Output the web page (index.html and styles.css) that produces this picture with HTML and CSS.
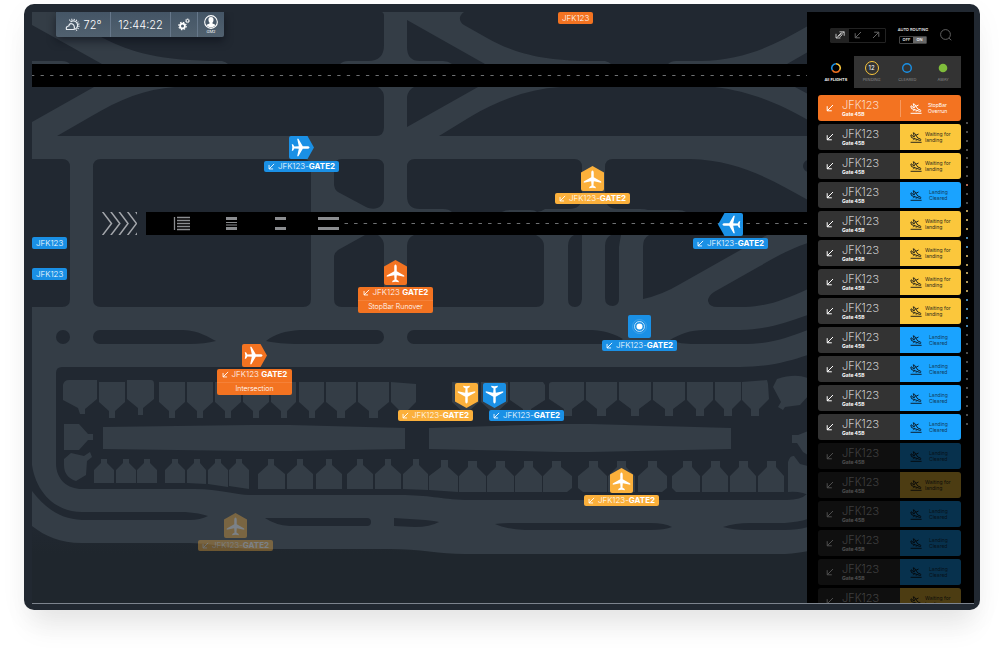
FILE: index.html
```html
<!DOCTYPE html>
<html lang="en">
<head>
<meta charset="utf-8">
<title>Ground traffic</title>
<link rel="stylesheet" href="styles.css">
</head>
<body>
<svg class="sprite" aria-hidden="true">
  <symbol id="arrow-in" viewBox="0 0 8 8"><path d="M7 1 1.2 6.8M1.2 2.2v4.6h4.6" fill="none" stroke="currentColor"/></symbol>
  <symbol id="arrow-out" viewBox="0 0 8 8"><path d="M1 7 6.8 1.2M2.2 1.2h4.6v4.6" fill="none" stroke="currentColor"/></symbol>
  <symbol id="arrow-both" viewBox="0 0 10 8"><path d="M4.5.8h4.7v4M9.2.8 1 7M1 2.8V7h4.4M6.5 1.5 3 5M7.5 3.5 4.5 6.2" fill="none" stroke="currentColor" stroke-width=".9"/></symbol>
  <symbol id="plane" viewBox="0 0 20 20"><path d="M10 .5c.9 0 1.3 1.2 1.3 2.6v4.500l7.900 4.600v1.300l-7.800-1.700-.4 4.600 2.400 1.500v1.300L10 18.600l-3.400.6v-1.300L9 16.400l-.4-4.600-7.800 1.700v-1.300l7.900-4.600V3.100C8.700 1.700 9.100.5 10 .5z" fill="#fff"/></symbol>
  <symbol id="pin-up" viewBox="0 0 23 25"><path d="M11.500 0 23 6.500V23a2 2 0 0 1-2 2H2a2 2 0 0 1-2-2V6.500z" fill="currentColor"/><use href="#plane" x="2" y="4" width="19" height="19"/></symbol>
  <symbol id="pin-down" viewBox="0 0 23 25"><use href="#pin-up" width="23" height="25" transform="rotate(180 11.500 12.500)"/></symbol>
  <symbol id="pin-right" viewBox="0 0 25 23"><use href="#pin-up" width="23" height="25" transform="translate(25 0) rotate(90)"/></symbol>
  <symbol id="pin-left" viewBox="0 0 25 23"><use href="#pin-up" width="23" height="25" transform="translate(0 23) rotate(-90)"/></symbol>
  <symbol id="pin-spot" viewBox="0 0 23 23"><rect width="23" height="23" rx="2" fill="currentColor"/><circle cx="11.500" cy="11.500" r="3" fill="#fff"/><circle cx="11.500" cy="11.500" r="5" fill="none" stroke="#fff" stroke-width=".7"/><circle cx="11.500" cy="11.500" r="7" fill="none" stroke="#fff" stroke-width=".4" opacity=".4"/></symbol>
  <symbol id="landing" viewBox="0 0 12 11"><g fill="none" stroke="currentColor" stroke-width="1" stroke-linejoin="round"><path d="M.8 3.200 1.500 5.600 9.800 8.400c1.500.4 1.500-1 .4-1.500L7.800 6 4.500 1.200 3.200.8l1.300 4-2-.7-.8-1.300z"/><path d="M4.600 6.700 3.200 8.200M7 7.500l-1 1.200M5.500 3.500l3-1.500M.6 10.300h11"/></g></symbol>
</svg>

<main class="device">
  <section class="map" aria-label="Airport map">
    <svg class="map__ground" viewBox="32 12 775 591" preserveAspectRatio="xMinYMin slice" aria-hidden="true">
      <defs>
        <clipPath id="chevron-box"><rect x="102" y="212" width="35" height="23"/></clipPath>
        <linearGradient id="fade" x1="0" y1="0" x2="0" y2="1"><stop offset="0" stop-color="#212831"/><stop offset=".35" stop-color="#1f262d"/><stop offset="1" stop-color="#1f262d"/></linearGradient>
      </defs>
      <rect x="32" y="12" width="776" height="592" fill="#343d46"/>
      <g fill="#212831">
        <path d="M32 25 102 64H70Q67 61 62 61H32zM55 12 103 38C130 52 160 61 222 61Q226 62 228 64H340Q343 61 348 61H368Q384 61 384 45V16Q384 12 381 12z"/>
        <path d="M407 20 485 64H452Q448 61 443 61H420Q407 61 407 47zM464 12C458 16 459 22 464 25L487 38C512 52 540 61 590 61H605Q609 62 611 64H668Q671 61 676 61H700C745 60 775 45 808 26V12zM787 64 808 52V64z"/>
        <path d="M32 87H94L32 122zM57 136 90 117C120 99 145 89 175 87H378Q384 91 384 97V127Q384 136 376 136zM407 127V97Q408 90 414 87H478zM439 136 470 117C500 99 530 89 560 87H715C755 92 785 107 808 120V136zM795 87H808V94z"/>
        <path d="M32 159H62Q70 159 70 167V299Q70 307 62 307H32zM101 159H303Q311 159 311 167V299Q311 307 303 307H101Q93 307 93 299V167Q93 159 101 159z"/>
        <path d="M334 167Q334 159 342 159H376Q384 159 384 167V198C384 208 374 211 366 207L338 192Q334 189 334 184zM415 159H574Q582 159 582 167V198Q581 209 569 209H545Q541 212 537 212 535 210 530 210H510Q505 210 502 212H452Q449 209 443 209H420Q407 209 407 196V167Q407 159 415 159z"/>
        <path d="M605 167Q605 159 613 159H690C740 160 775 182 808 200V212H686Q683 210 678 210H648Q645 209 640 209H618Q605 209 605 196z"/><circle cx="809" cy="166" r="6"/>
        <path d="M365 235H378Q384 239 384 246V299Q384 307 376 307H342Q334 307 334 299V257Q334 253 338 250zM414 235H536Q544 239 544 246V299Q544 307 536 307H415Q407 307 407 299V246Q407 238 414 235z"/>
        <path d="M574 235H582V299Q581 307 575 307 568 307 568 299V246Q568 238 574 235zM611 235H621Q620 240 619 247V299Q619 305 613 306 605 306 605 298V246Q605 238 611 235zM649 235H767L682 283Q662 295 643 299V247Q643 238 649 235z"/>
        <path d="M808 243C790 249 775 257 760 266L714 292Q708 296 708 301 709 307 718 307H745C770 306 785 299 808 289z"/>
        <circle cx="63" cy="337" r="7"/>
        <path d="M100 330H183C200 331 208 337 216 341 208 343 200 344 190 344H100a7 7 0 0 1 0-14zM266 341C275 334 285 331 300 330H377a7 7 0 0 1 0 14H300C285 344 275 343 266 341zM414 330H592C608 331 616 335 623 339 618 343 610 344 600 344H414a7 7 0 0 1 0-14zM670 340C680 334 690 330 705 330H740C770 329 785 323 808 315V330C785 338 775 344 740 344H695C685 344 677 343 670 340z"/>
        <path d="M62 367H740C770 367 790 361 808 355V493Q802 500 787 500H465C440 499 430 495 400 495H250C235 495 220 489 195 489H82C68 489 56 480 56 463V373Q56 367 62 367z"/>
        <path d="M32 465C36 492 55 512 82 512H185Q200 513 208 516 200 520 190 520H82C60 519 45 508 32 491zM265 518H367a4 4 0 0 1 0 8H290Q275 525 265 518zM394 518 425 520Q435 521 439 522 430 527 415 527L394 526zM495 524Q505 523 510 523H650Q665 523 672 527 665 530 650 530H525Q505 529 495 524zM723 527Q735 523 750 523H785Q800 522 808 519V527Q798 530 785 530H745Q735 530 723 527z"/>
      </g>
      <path d="M32 526C45 536 60 543 82 543H190C220 544 230 549 260 549H390C420 549 440 554 465 554H785Q800 553 808 551V604H32z" fill="url(#fade)"/>
      <g fill="#343d46">
        <path d="M63 385Q64 380 69 380H97V399L85 409V414H80L78 408 63 400zM99 382h26v20l-10 9v7h-6v-7l-10-9zM127 380h24q3 0 3 4v15l-11 9v7h-5v-7l-11-9z"/>
        <path d="M159 382h26v20l-10 9v7h-6v-7l-10-9zM187 382h26v20l-10 9v7h-6v-7l-10-9zM215 382h26v20l-10 9v7h-6v-7l-10-9zM243 382h26v20l-10 9v7h-6v-7l-10-9zM271 382h25v20l-9 9v7h-6v-7l-10-9zM299 382h25v20l-9 9v7h-6v-7l-10-9zM326 382h30v20l-11 9v7h-8v-7l-11-9zM358 382h31v20l-11 9v7h-9v-7l-11-9zM391 382l25 2v18l-9 9v7h-7v-7l-9-9z"/>
        <path d="M452 382h27v20l-10 9v7h-7v-7l-10-9zM481 382h27v20l-10 9v7h-7v-7l-10-9zM510 382h33l2 3v15l-14 9v7h-8v-7l-13-9zM549 385q0-3 3-3h32v18l-12 9v7h-8v-7l-15-10zM586 382h31v18l-11 9v7h-9v-7l-11-9zM619 382h32v18l-12 9v7h-8v-7l-12-9zM653 382h32v18l-12 9v7h-8v-7l-12-9zM687 382h26v18l-9 9v7h-8v-7l-9-9zM715 382h26v18l-9 9v7h-8v-7l-9-9zM742 382 767 380 768 384 769 399 759 409V416H751V409L742 400z"/>
        <path d="M808 378Q795 373 777 379L773 387 781 402 778 407 783 410 785 407 800 405 808 396zM792 435h6l10-4v24l-5-3-6-9h-5zM788 462Q790 455 794 456L800 464 808 466V495L803 493Q795 491 788 492z"/>
        <path d="M64 424h15l9 10h5v6h-5l-9 10H64zM64 459 71 453 84 456 90 452 92 457 87 461 86 475 76 481Q64 477 64 465z"/>
        <path d="M103 427 250 425H290L405 428V449L290 451H250L103 449zM429 428 560 424H590L731 428V449L590 452H560L429 449z"/>
        <path d="M101 459h6v4l7 7v13H94v-13l7-7zM123 459h6v4l7 7v13h-20v-13l7-7zM144 459h6v4l7 7v13h-20v-13l7-7zM172 459h6v4l7 7v13h-20v-13l7-7zM194 459h6v4l6 7v14l-19-1v-13l7-7zM215 459h6v4l7 7v17l-20-3v-14l7-7zM236 459h6v4l7 7v19l-20-3v-16l7-7z"/>
        <path d="M268 459h6v6l11 9v15h-27v-15l10-9zM297 459h6v6l10 9v15h-26v-15l10-9zM326 459h6v6l10 9v15h-26v-15l10-9zM357 459h6v6l10 9v15h-26v-15l10-9zM385 459h6v6l10 9v15h-26v-15l10-9zM413 459h6v6l9 9v16l-25-1v-15l10-9zM441 460h7v7l10 9v16l-29-2v-14l12-9zM468 461h9v6l9 9v16h-27v-16l9-9zM496 461h9v6l9 9v16h-27v-16l9-9zM524 461h9v6l9 9v16h-27v-16l9-9z"/>
        <path d="M552 461h9v6l11 9v12l-5 4h-24v-16l9-9zM589 461h9v6l9 9v16h-24l-5-4v-12l11-9zM617 461h9v6l9 9v16h-27v-16l9-9zM648 461h9v6l10 9v12l-5 4h-24v-16l10-9zM683 461h9v6l8 9v16h-24l-4-4v-12l11-9zM711 461h9v6l8 9v16h-26v-16l9-9zM739 461h9v6l8 9v16h-26v-16l9-9zM767 461h9v6l8 9v16h-26v-16l9-9z"/>
      </g>
      <path d="M32 64H808V87H32zM146 212H808V235H146z" fill="#000"/>
      <g fill="none" stroke="#8b8d90">
        <path d="M32 75.500H808" stroke="#6f7173" stroke-dasharray="3.300 6.270" stroke-dashoffset="1"/>
        <path d="M344.500 223.500H808" stroke="#6f7173" stroke-dasharray="3.500 6.070"/>
        <path d="M174.500 217V230" stroke-width="1.300"/>
        <path d="M177 217.500h13M177 220.500h13M177 223.500h13M177 226.500h13M177 229.500h13" stroke-width="1.600"/>
        <path d="M226 218.500h11M226 228.500h11M275 218.500h11M275 228.500h11" stroke-width="3"/>
        <path d="M226 222.500h11M226 225h11"/>
        <path d="M318 218.500h21M318 228.500h21" stroke-width="3"/>
        <g clip-path="url(#chevron-box)" stroke="#a3a6ab" stroke-width="1.500"><path d="M102 211 111.500 223.500 102 236M110.300 211 119.800 223.500 110.300 236M118.600 211 128 223.500 118.600 236M127 211 136.500 223.500 127 236M135.300 211 144 223.500 135.300 236"/></g>
      </g>
    </svg>

    <header class="toolbar">
      <div class="toolbar__cell toolbar__weather">
        <svg width="17" height="14" viewBox="0 0 17 14" fill="none" stroke="#e8edf2"><path d="M1.500 11.500Q.5 8.500 3.800 8 4.500 4.800 7.500 6 10 7.500 9.200 11.500z" stroke-width="1.200"/><path d="M5.500 4A4.300 4.300 0 1 1 10 11.200" stroke-width="1.200"/><path d="M4.400 2.500A6 6 0 1 1 10 13" stroke-width="1.500" stroke-dasharray="1 1.200"/></svg>
        <span>72°</span>
      </div>
      <time class="toolbar__cell toolbar__time">12:44:22</time>
      <button class="toolbar__cell" aria-label="Settings">
        <svg width="12" height="13" viewBox="0 0 12 13" fill="none" stroke="#fff"><circle cx="4.500" cy="8" r="2.400" stroke-width="1.800"/><circle cx="4.500" cy="8" r="3.700" stroke-width="1.200" stroke-dasharray="1.500 1.400"/><circle cx="9.500" cy="2.800" r="1.300" stroke-width="1"/><circle cx="9.500" cy="2.800" r="2" stroke-width=".8" stroke-dasharray=".9 .67"/></svg>
      </button>
      <button class="toolbar__cell toolbar__user">
        <svg width="14" height="14" viewBox="0 0 13 13"><circle cx="6.500" cy="6.500" r="5.900" fill="none" stroke="#fff"/><path d="M6.500 1.800c2 0 2.500 1.400 2.300 3-.1 1.300-.8 2-1.100 2.600.2 1 2.500 1 3 2.200Q9 11.500 6.500 11.500T2.300 9.600c.5-1.200 2.800-1.200 3-2.200-.3-.6-1-1.300-1.100-2.600-.2-1.600.3-3 2.300-3z" fill="#fff"/></svg>
        <span>GM2</span>
      </button>
    </header>

    <span class="tag tag--orange tag--north">JFK123</span>
    <span class="tag tag--blue tag--west-a">JFK123</span>
    <span class="tag tag--blue tag--west-b">JFK123</span>

    <div class="pin pin--blue pin--a"><svg class="pin__icon pin__icon--wide"><use href="#pin-right"/></svg><div class="pin__label"><p><svg><use href="#arrow-in"/></svg>JFK123-<b>GATE2</b></p></div></div>
    <div class="pin pin--yellow pin--b"><svg class="pin__icon"><use href="#pin-up"/></svg><div class="pin__label"><p><svg><use href="#arrow-in"/></svg>JFK123-<b>GATE2</b></p></div></div>
    <div class="pin pin--blue pin--c"><svg class="pin__icon pin__icon--wide"><use href="#pin-left"/></svg><div class="pin__label"><p><svg><use href="#arrow-in"/></svg>JFK123-<b>GATE2</b></p></div></div>
    <div class="pin pin--orange pin--d"><svg class="pin__icon"><use href="#pin-up"/></svg><div class="pin__label"><p><svg><use href="#arrow-in"/></svg>JFK123 <b>GATE2</b></p><p class="pin__alert">StopBar Runover</p></div></div>
    <div class="pin pin--orange pin--e"><svg class="pin__icon pin__icon--wide"><use href="#pin-right"/></svg><div class="pin__label"><p><svg><use href="#arrow-in"/></svg>JFK123 <b>GATE2</b></p><p class="pin__alert">Intersection</p></div></div>
    <div class="pin pin--blue pin--f"><svg class="pin__icon pin__icon--square"><use href="#pin-spot"/></svg><div class="pin__label"><p><svg><use href="#arrow-in"/></svg>JFK123-<b>GATE2</b></p></div></div>
    <div class="pin pin--yellow pin--g"><svg class="pin__icon"><use href="#pin-down"/></svg><div class="pin__label"><p><svg><use href="#arrow-in"/></svg>JFK123-<b>GATE2</b></p></div></div>
    <div class="pin pin--blue pin--h"><svg class="pin__icon"><use href="#pin-down"/></svg><div class="pin__label"><p><svg><use href="#arrow-in"/></svg>JFK123-<b>GATE2</b></p></div></div>
    <div class="pin pin--yellow pin--i"><svg class="pin__icon"><use href="#pin-up"/></svg><div class="pin__label"><p><svg><use href="#arrow-in"/></svg>JFK123-<b>GATE2</b></p></div></div>
    <div class="pin pin--yellow pin--j"><svg class="pin__icon"><use href="#pin-up"/></svg><div class="pin__label"><p><svg><use href="#arrow-in"/></svg>JFK123-<b>GATE2</b></p></div></div>
  </section>

  <aside class="panel">
    <div class="controls">
      <div class="modes">
        <button class="is-on" aria-label="All directions"><svg width="10" height="8"><use href="#arrow-both"/></svg></button>
        <button aria-label="Arrivals"><svg width="8" height="8"><use href="#arrow-in"/></svg></button>
        <button aria-label="Departures"><svg width="8" height="8"><use href="#arrow-out"/></svg></button>
      </div>
      <div class="routing">
        <span>AUTO ROUTING</span>
        <div class="routing__switch"><button>OFF</button><button class="is-on">ON</button></div>
      </div>
      <button class="search" aria-label="Search"><svg width="12" height="12" viewBox="0 0 12 12"><circle cx="5.500" cy="5.500" r="4.900" fill="none" stroke="#777" stroke-width=".8"/><path d="m9 9.200 2.300 2" stroke="#777" stroke-width=".8"/></svg></button>
    </div>

    <nav class="tabs">
      <button class="is-on"><svg width="16" height="16" viewBox="0 0 16 16" fill="none" stroke-width="1.600"><path d="M8 3.700A4.300 4.300 0 0 1 11.700 10.200" stroke="#fbc73c"/><path d="M11.700 10.200A4.300 4.300 0 0 1 4.300 10.200" stroke="#f37321"/><path d="M4.300 10.200A4.300 4.300 0 0 1 8 3.700" stroke="#1a90e5"/></svg>All FLIGHTS</button>
      <button><span class="tabs__count">12</span>PENDING</button>
      <button><svg width="16" height="16" viewBox="0 0 16 16"><circle cx="8" cy="8" r="4.300" fill="none" stroke="#1a90e5" stroke-width="1.400"/></svg>CLEARED</button>
      <button><svg width="16" height="16" viewBox="0 0 16 16"><circle cx="8" cy="8" r="4.300" fill="#7fbc3b"/></svg>AWAY</button>
    </nav>

    <div class="board">
      <ul class="flights">
        <li class="flight flight--alert"><svg class="flight__way"><use href="#arrow-in"/></svg><div class="flight__id"><h3>JFK123</h3><p>Gate 45B</p></div><div class="flight__status"><svg><use href="#landing"/></svg><span>StopBar<br>Overrun</span></div></li>
        <li class="flight flight--wait"><svg class="flight__way"><use href="#arrow-in"/></svg><div class="flight__id"><h3>JFK123</h3><p>Gate 45B</p></div><div class="flight__status"><svg><use href="#landing"/></svg><span>Waiting for<br>landing</span></div></li>
        <li class="flight flight--wait"><svg class="flight__way"><use href="#arrow-in"/></svg><div class="flight__id"><h3>JFK123</h3><p>Gate 45B</p></div><div class="flight__status"><svg><use href="#landing"/></svg><span>Waiting for<br>landing</span></div></li>
        <li class="flight flight--clear"><svg class="flight__way"><use href="#arrow-in"/></svg><div class="flight__id"><h3>JFK123</h3><p>Gate 45B</p></div><div class="flight__status"><svg><use href="#landing"/></svg><span>Landing<br>Cleared</span></div></li>
        <li class="flight flight--wait"><svg class="flight__way"><use href="#arrow-in"/></svg><div class="flight__id"><h3>JFK123</h3><p>Gate 45B</p></div><div class="flight__status"><svg><use href="#landing"/></svg><span>Waiting for<br>landing</span></div></li>
        <li class="flight flight--wait"><svg class="flight__way"><use href="#arrow-in"/></svg><div class="flight__id"><h3>JFK123</h3><p>Gate 45B</p></div><div class="flight__status"><svg><use href="#landing"/></svg><span>Waiting for<br>landing</span></div></li>
        <li class="flight flight--wait"><svg class="flight__way"><use href="#arrow-in"/></svg><div class="flight__id"><h3>JFK123</h3><p>Gate 45B</p></div><div class="flight__status"><svg><use href="#landing"/></svg><span>Waiting for<br>landing</span></div></li>
        <li class="flight flight--wait"><svg class="flight__way"><use href="#arrow-in"/></svg><div class="flight__id"><h3>JFK123</h3><p>Gate 45B</p></div><div class="flight__status"><svg><use href="#landing"/></svg><span>Waiting for<br>landing</span></div></li>
        <li class="flight flight--clear"><svg class="flight__way"><use href="#arrow-in"/></svg><div class="flight__id"><h3>JFK123</h3><p>Gate 45B</p></div><div class="flight__status"><svg><use href="#landing"/></svg><span>Landing<br>Cleared</span></div></li>
        <li class="flight flight--clear"><svg class="flight__way"><use href="#arrow-in"/></svg><div class="flight__id"><h3>JFK123</h3><p>Gate 45B</p></div><div class="flight__status"><svg><use href="#landing"/></svg><span>Landing<br>Cleared</span></div></li>
        <li class="flight flight--clear"><svg class="flight__way"><use href="#arrow-in"/></svg><div class="flight__id"><h3>JFK123</h3><p>Gate 45B</p></div><div class="flight__status"><svg><use href="#landing"/></svg><span>Landing<br>Cleared</span></div></li>
        <li class="flight flight--clear"><svg class="flight__way"><use href="#arrow-in"/></svg><div class="flight__id"><h3>JFK123</h3><p>Gate 45B</p></div><div class="flight__status"><svg><use href="#landing"/></svg><span>Landing<br>Cleared</span></div></li>
        <li class="flight flight--clear flight--dim"><svg class="flight__way"><use href="#arrow-in"/></svg><div class="flight__id"><h3>JFK123</h3><p>Gate 45B</p></div><div class="flight__status"><svg><use href="#landing"/></svg><span>Landing<br>Cleared</span></div></li>
        <li class="flight flight--wait flight--dim"><svg class="flight__way"><use href="#arrow-in"/></svg><div class="flight__id"><h3>JFK123</h3><p>Gate 45B</p></div><div class="flight__status"><svg><use href="#landing"/></svg><span>Waiting for<br>landing</span></div></li>
        <li class="flight flight--clear flight--dim"><svg class="flight__way"><use href="#arrow-in"/></svg><div class="flight__id"><h3>JFK123</h3><p>Gate 45B</p></div><div class="flight__status"><svg><use href="#landing"/></svg><span>Landing<br>Cleared</span></div></li>
        <li class="flight flight--clear flight--dim"><svg class="flight__way"><use href="#arrow-in"/></svg><div class="flight__id"><h3>JFK123</h3><p>Gate 45B</p></div><div class="flight__status"><svg><use href="#landing"/></svg><span>Landing<br>Cleared</span></div></li>
        <li class="flight flight--clear flight--dim"><svg class="flight__way"><use href="#arrow-in"/></svg><div class="flight__id"><h3>JFK123</h3><p>Gate 45B</p></div><div class="flight__status"><svg><use href="#landing"/></svg><span>Landing<br>Cleared</span></div></li>
        <li class="flight flight--wait flight--dim"><svg class="flight__way"><use href="#arrow-in"/></svg><div class="flight__id"><h3>JFK123</h3><p>Gate 45B</p></div><div class="flight__status"><svg><use href="#landing"/></svg><span>Waiting for<br>landing</span></div></li>
      </ul>
      <div class="dots" aria-hidden="true"><i></i><i></i><i></i><i></i><i></i><i></i><i></i><i class="o"></i><i></i><i></i><i class="y"></i><i class="y"></i><i class="y"></i><i class="b"></i><i class="b"></i><i class="y"></i><i class="y"></i><i class="y"></i><i class="y"></i><i class="y"></i><i class="b"></i><i class="b"></i><i class="b"></i><i class="b"></i><i></i><i></i><i></i><i></i><i></i><i></i><i></i><i></i><i></i><i></i><i></i></div>
    </div>
  </aside>
</main>
</body>
</html>
```

FILE: styles.css
```css
* { box-sizing: border-box; }

body {
  margin: 0;
  min-height: 100vh;
  padding: 4px 24px 44px;
  background: #fff;
  font-family: Inter, "Liberation Sans", sans-serif;
  color: #fff;
  overflow: hidden;
}

button {
  margin: 0;
  padding: 0;
  border: 0;
  background: none;
  color: inherit;
  font: inherit;
}

h3, p, ul { margin: 0; padding: 0; font-weight: inherit; }

svg { display: block; flex: none; }

.sprite { position: absolute; width: 0; height: 0; }

.device {
  display: flex;
  height: calc(100vh - 48px);
  padding: 8px 6px 6px 8px;
  border-radius: 10px;
  background: #212831;
  box-shadow: 0 24px 28px -8px rgba(0, 0, 0, .08), 0 8px 30px rgba(0, 0, 0, .04);
}

/* Map */
.map {
  position: relative;
  flex: 1;
  overflow: hidden;
  border-bottom: 1px solid #7d848e;
}

.map__ground { width: 100%; height: 100%; }

.toolbar {
  position: absolute;
  top: 0;
  left: 24px;
  display: flex;
  height: 25px;
  border-radius: 0 0 2px 2px;
  background: linear-gradient(#445566, #51616f);
  box-shadow: 0 4px 8px rgba(10, 14, 24, .6);
}

.toolbar__cell {
  display: flex;
  align-items: center;
  justify-content: center;
  width: 27px;
  border-right: 1px solid #66778a;
}
.toolbar__cell:last-child { width: 26px; border-right: 0; }
.toolbar__weather { width: 55px; gap: 2px; font-size: 11px; font-weight: 300; }
.toolbar__time { width: 60px; font-size: 11px; font-weight: 300; }
.toolbar__user { flex-direction: column; font-size: 4px; line-height: 6px; }

.tag {
  position: absolute;
  padding: 0 4px;
  border-radius: 2px;
  font-size: 8px;
  line-height: 12px;
  font-weight: 300;
}
.tag--orange { background: #f37321; }
.tag--blue { background: #1a90e5; }
.tag--north { left: 526px; top: 0; }
.tag--west-a { left: 0; top: 225px; }
.tag--west-b { left: 0; top: 256px; }

.pin {
  position: absolute;
  display: flex;
  flex-direction: column;
  align-items: center;
  gap: 2px;
  width: 75px;
}
.pin--blue { color: #1a90e5; }
.pin--yellow { color: #fbb03b; }
.pin--orange { color: #f37321; }

.pin__icon { width: 23px; height: 25px; }
.pin__icon--wide { width: 25px; height: 23px; }
.pin__icon--square { height: 23px; }

.pin__label {
  width: 75px;
  border-radius: 2px;
  background: currentColor;
  font-size: 8px;
  line-height: 11px;
  white-space: pre;
}
.pin__label p {
  display: flex;
  align-items: center;
  justify-content: center;
  color: #fff;
  font-weight: 300;
}
.pin__label b { font-weight: 700; }
.pin__label svg { width: 7px; height: 7px; margin-right: 3px; }
.pin__label .pin__alert {
  margin-top: 2px;
  border-top: 1px solid #f58138;
  font-size: 7px;
  line-height: 12px;
}

.pin--a { left: 232px; top: 124px; }
.pin--b { left: 523px; top: 154px; }
.pin--c { left: 661px; top: 201px; }
.pin--d { left: 326px; top: 248px; }
.pin--e { left: 185px; top: 332px; }
.pin--f { left: 570px; top: 303px; }
.pin--g { left: 366px; top: 371px; width: 80px; align-items: flex-start; }
.pin--g .pin__icon { align-self: flex-end; }
.pin--h { left: 451px; top: 371px; width: 81px; align-items: flex-end; }
.pin--h .pin__icon { align-self: flex-start; }
.pin--i { left: 552px; top: 456px; }
.pin--j { left: 166px; top: 501px; opacity: .35; }

/* Flight panel */
.panel {
  display: flex;
  flex-direction: column;
  flex: none;
  width: 167px;
  padding-left: 11px;
  background: #000;
  border-bottom: 1px solid #7d848e;
  overflow: hidden;
}

.controls {
  display: flex;
  flex: none;
  align-items: center;
  justify-content: space-between;
  height: 44px;
  padding: 2px 22px 0 12px;
}

.modes { display: flex; border: 1px solid #222; border-radius: 1px; color: #666; }
.modes button { display: grid; place-items: center; width: 18px; height: 13px; }
.modes .is-on { background: #222; color: #ccc; }

.routing { width: 28px; font-size: 4px; line-height: 6px; font-weight: 500; }
.routing span { display: flex; justify-content: center; white-space: nowrap; }
.routing__switch { display: flex; margin-top: 3px; border: 1px solid #444; border-radius: 1px; }
.routing__switch button { flex: 1; height: 6px; }
.routing__switch .is-on { background: #666; }

.tabs {
  display: flex;
  flex: none;
  margin-right: 13px;
  background: #333;
}
.tabs button {
  display: flex;
  flex: 1;
  flex-direction: column;
  align-items: center;
  gap: 1px;
  height: 32px;
  padding-top: 4px;
  color: #8a8a8a;
  font-size: 4px;
  line-height: 6px;
  white-space: nowrap;
}
.tabs .is-on { background: #000; color: #fff; font-weight: 600; }
.tabs__count {
  width: 14px;
  height: 14px;
  margin: 1px;
  border: 1px solid #fbc73c;
  border-radius: 50%;
  color: #fff;
  font-size: 6px;
  line-height: 12px;
  text-align: center;
}

.board { display: flex; flex: none; gap: 5px; margin-top: 7px; }

.flights { display: grid; flex: none; gap: 3px; width: 143px; list-style: none; }

.flight {
  display: flex;
  align-items: center;
  height: 26px;
  border-radius: 3px;
  background: #333;
  overflow: hidden;
}
.flight__way { width: 8px; height: 8px; margin: 0 8px; }
.flight__id { flex: 1; }
.flight__id h3 { font-size: 11px; line-height: 11px; font-weight: 200; }
.flight__id p { font-size: 5px; line-height: 6px; font-weight: 700; }

.flight__status {
  display: flex;
  align-items: center;
  align-self: stretch;
  width: 61px;
  padding-left: 10px;
  color: #2d2a1c;
  font-size: 5px;
  line-height: 6px;
}
.flight__status svg { width: 12px; height: 11px; margin-right: 3px; }
.flight__status span { white-space: nowrap; }

.flight--wait .flight__status { background: #fbc73c; }
.flight--clear .flight__status { background: #1aa3ff; color: #123a58; }
.flight--clear .flight__status svg { margin-right: 7px; color: #0c2233; }
.flight--alert .flight__status svg { margin-right: 6px; }
.flight--alert { background: #f37321; }
.flight--alert .flight__status { color: #fff; background: linear-gradient(#f79a60, #f79a60) 0 50% / 1px 17px no-repeat; }
.flight--dim { opacity: .3; }

.dots {
  display: flex;
  flex: none;
  flex-direction: column;
  justify-content: space-between;
  height: 303px;
  margin-top: 27px;
}
.dots i { width: 2px; height: 2px; border-radius: 50%; background: #666; }
.dots .o { background: #e58a6c; }
.dots .y { background: #e8c877; }
.dots .b { background: #5fb0e8; }
```
